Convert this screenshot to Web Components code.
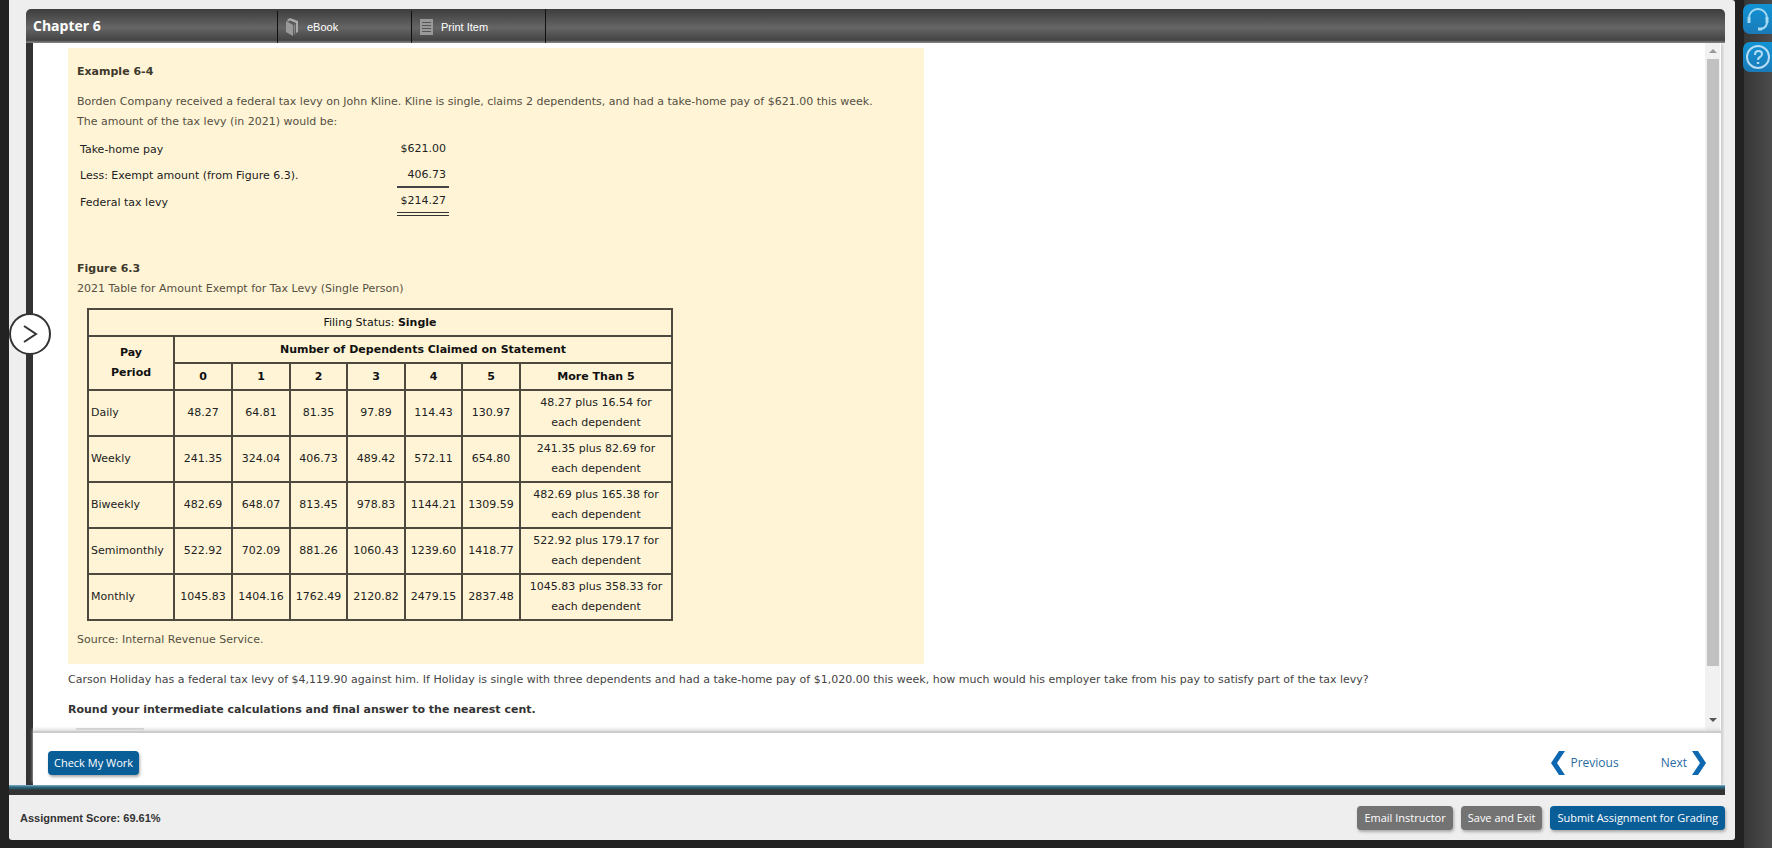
<!DOCTYPE html>
<html lang="en">
<head>
<meta charset="utf-8">
<title>Chapter 6</title>
<style>
  html, body { margin: 0; height: 100%; background: #222; }
  body { font: 11px/20px "DejaVu Sans", Verdana, sans-serif; color: #444; }
</style>
</head>
<body>
<assignment-app></assignment-app>

<template id="t-app">
  <style>
    :host { display: flex; height: 100vh; box-sizing: border-box; padding: 0 0 8px 9px; overflow: hidden; background: #222; }
    .frame { flex: 1; min-width: 0; display: flex; flex-direction: column; background: #eee; border-radius: 0 3px 3px 3px; position: relative; }
    .work { flex: 1; min-height: 0; margin: 9px 10px 0 17px; display: flex; flex-direction: column; }
    .pane { flex: 1; min-height: 0; margin-right: 4px; border-left: 7px solid #333; display: flex; flex-direction: column; background: #fff; box-shadow: 3px 0 2px -1px #ccc; }
    .rule { height: 10px; margin-right: 10px; background: linear-gradient(#7db0cf 0, #2f6a80 2px, #284e58 4px, #333 5px); }
    .toggle { position: absolute; left: 0; top: 313px; width: 42px; height: 42px; padding: 0; border: 2px solid #333; border-radius: 50%; background: #fff; }
    .toggle svg { display: block; margin: auto; }
    aside { width: 37px; margin-bottom: -8px; box-sizing: border-box; padding: 4px 0 0 8px; display: flex; flex-direction: column; gap: 8px;
      background: linear-gradient(90deg, #222 9px, #363636 9px, #4c4c4c 100%); }
  </style>
  <div class="frame">
    <div class="work">
      <chapter-header heading="Chapter 6"></chapter-header>
      <div class="pane">
        <scroll-view><tax-question></tax-question></scroll-view>
        <question-nav></question-nav>
      </div>
    </div>
    <div class="rule"></div>
    <score-bar></score-bar>
    <button class="toggle" aria-label="Open question list">
      <svg width="16" height="20" viewBox="0 0 16 20" fill="none" stroke="#333" stroke-width="2"><path d="M2 2l12 8-12 8"/></svg>
    </button>
  </div>
  <aside>
    <side-tab label="Support">
      <svg width="26" height="26" viewBox="0 0 26 26" fill="none" stroke="#a5daf5"><path stroke-width="2" d="M4 13V12a9 9 0 0 1 18 0v5q-1 5-6 6"/><path stroke-width="3" d="M4 11v6M22 11v6"/><path stroke-width="3" d="M13 23h4"/></svg>
    </side-tab>
    <side-tab label="Help">
      <svg width="26" height="26" viewBox="0 0 26 26" fill="none" stroke="#b5dcf4" stroke-width="2"><circle cx="13" cy="13" r="11"/><path d="M10 11q0-4 3.500-4t3.500 3q0 2-2 3t-2 3"/><path stroke-width="2.500" d="M13 18v2"/></svg>
    </side-tab>
  </aside>
</template>

<template id="t-side">
  <style>
    :host { display: block; }
    button { display: flex; align-items: center; width: 100%; height: 30px; padding: 0 0 0 2px; border: 0; border-radius: 7px 0 0 7px; background: linear-gradient(#1193d4, #1a7ab8); overflow: hidden; }
    ::slotted(svg) { flex: none; }
  </style>
  <button><slot></slot></button>
</template>

<template id="t-header">
  <style>
    :host { display: block; flex: none; }
    header { display: flex; height: 34px; box-sizing: border-box; border-radius: 5px 5px 0 0; color: #fff;
      background: linear-gradient(#3d3d3d, #656565 55%, #444 92%, #777 97%); }
    h1 { width: 244px; margin: 0; padding-left: 7px; font: bold 14px/33px "Open Sans", sans-serif; }
    a { display: flex; align-items: center; gap: 8px; width: 134px; box-sizing: border-box; padding-left: 8px; border-left: 1px solid #111; margin-top: 2px;
      font: 11px/30px "Liberation Sans", Arial, sans-serif; color: #fff; text-decoration: none; }
    nav { display: flex; border-right: 1px solid #111; }
  </style>
  <header>
    <h1></h1>
    <nav>
      <a href="#ebook"><svg width="13" height="18" viewBox="0 0 13 18"><path fill="#9a9a9a" d="M0 3l7 4v11l-7-4z"/><path fill="#aaa" d="M1 2l3-2 8 3v11l-2 1V5L4 2.500 2 3.500z"/><path fill="#888" d="M8 7l1-1v10l-1 1z"/></svg>eBook</a>
      <a href="#print"><svg width="13" height="16" viewBox="0 0 13 16"><path fill="#999" d="M0 0h13v16H0z"/><path stroke="#555" d="M2 3.500h9M2 6.500h9M2 9.500h9M2 12.500h9"/></svg>Print Item</a>
    </nav>
  </header>
</template>

<template id="t-scroll">
  <style>
    :host { flex: 1; min-height: 0; display: flex; }
    .view { flex: 1; min-width: 0; overflow: auto; scrollbar-width: none; }
    .bar { width: 15px; margin-right: 1px; background: #f1f1f1; display: flex; flex-direction: column; align-items: center; }
    .bar i { border: 4px solid transparent; }
    .bar .up { border-bottom-color: #999; border-top: 0; margin: 6px 0; }
    .bar .down { border-top-color: #555; border-bottom: 0; margin: 6px 0 9px; }
    .track { flex: 1; align-self: stretch; padding: 0 1px 0 2px; }
    .thumb { height: 93%; background: #c1c1c1; }
  </style>
  <div class="view"><slot></slot></div>
  <div class="bar" aria-hidden="true"><i class="up"></i><div class="track"><div class="thumb"></div></div><i class="down"></i></div>
</template>

<template id="t-question">
  <style>
    :host { display: block; padding: 5px 35px 0; }
    p { margin: 0; }
    .ask { margin-top: 6px; }
    .round { margin-top: 10px; font-weight: bold; color: #333; }
    .field { display: block; width: 68px; height: 26px; margin: 8px 0 0 8px; box-sizing: border-box; border: 2px solid #ccc; }
  </style>
  <tax-example></tax-example>
  <p class="ask">Carson Holiday has a federal tax levy of $4,119.90 against him. If Holiday is single with three dependents and had a take-home pay of $1,020.00 this week, how much would his employer take from his pay to satisfy part of the tax levy?</p>
  <p class="round" id="q">Round your intermediate calculations and final answer to the nearest cent.</p>
  <input class="field" aria-labelledby="q">
</template>

<template id="t-example">
  <style>
    :host { display: block; max-width: 856px; box-sizing: border-box; padding: 14px 9px; background: #fff5d6; color: #554f42; }
    h2, h3, p { margin: 0; font-size: 11px; line-height: 20px; }
    h2, h3 { color: #3d382c; }
    h2 { margin-bottom: 10px; }
    .calc { margin: 5px 0 43px; border-spacing: 0; color: #222; }
    .calc th { width: 317px; padding: 0 0 0 3px; text-align: left; font-weight: normal; height: 26px; }
    .calc td { padding: 0; vertical-align: top; }
    .calc span { display: block; padding: 2px 3px 1px; text-align: right; width: 46px; }
    .sum { border-bottom: 2px solid #444; }
    .total { border-bottom: 4px double #333; }
    .src { margin-top: 9px; }
  </style>
  <h2>Example 6-4</h2>
  <p>Borden Company received a federal tax levy on John Kline. Kline is single, claims 2 dependents, and had a take-home pay of $621.00 this week.<br>The amount of the tax levy (in 2021) would be:</p>
  <table class="calc">
    <tr><th scope="row">Take-home pay</th><td><span>$621.00</span></td></tr>
    <tr><th scope="row">Less: Exempt amount (from Figure 6.3).</th><td><span class="sum">406.73</span></td></tr>
    <tr><th scope="row">Federal tax levy</th><td><span class="total">$214.27</span></td></tr>
  </table>
  <h3>Figure 6.3</h3>
  <p>2021 Table for Amount Exempt for Tax Levy (Single Person)</p>
  <levy-table></levy-table>
  <p class="src">Source: Internal Revenue Service.</p>
</template>

<template id="t-levy">
  <style>
    :host { display: block; margin: 9px 0 0 10px; }
    table { table-layout: fixed; width: 586px; border-collapse: collapse; color: #222; }
    th, td { border: 2px solid #4d493f; padding: 0; height: 25px; text-align: center; }
    tbody th, tbody td { height: 44px; }
    thead { color: #111; }
    tbody th { text-align: left; padding-left: 2px; font-weight: normal; }
    .plain { font-weight: normal; }
    td:last-child { padding: 0 6px; }
    .pay { padding: 0 20px; }
  </style>
  <table>
    <colgroup><col style="width:86px"><col style="width:58px"><col style="width:58px"><col style="width:57px"><col style="width:58px"><col style="width:57px"><col style="width:58px"><col></colgroup>
    <thead>
      <tr><th class="plain" colspan="8">Filing Status: <b>Single</b></th></tr>
      <tr><th class="pay" rowspan="2">Pay Period</th><th colspan="7">Number of Dependents Claimed on Statement</th></tr>
      <tr><th>0</th><th>1</th><th>2</th><th>3</th><th>4</th><th>5</th><th>More Than 5</th></tr>
    </thead>
    <tbody></tbody>
  </table>
</template>

<template id="t-nav">
  <style>
    :host { flex: none; display: flex; align-items: center; height: 44px; padding: 8px 15px 0; background: #fff; border-top: 2px solid #ccc; box-shadow: 0 -2px 3px #ddd; position: relative; }
    nav { margin-left: auto; display: flex; gap: 42px; }
    a { display: flex; align-items: center; gap: 5px; font: 12px/24px "Open Sans", sans-serif; color: #2a6ba3; text-decoration: none; }
  </style>
  <action-button>Check My Work</action-button>
  <nav>
    <a href="#previous"><svg width="14" height="24" viewBox="0 0 14 24"><path fill="#0e68b1" d="M8 0h6L6 12l8 12H8L0 12z"/></svg>Previous</a>
    <a href="#next">Next<svg width="14" height="24" viewBox="0 0 14 24"><path fill="#0e68b1" d="M6 0H0l8 12-8 12h6l8-12z"/></svg></a>
  </nav>
</template>

<template id="t-score">
  <style>
    :host { flex: none; display: flex; align-items: center; gap: 8px; height: 45px; padding: 0 10px 0 11px; --button-pad: 7px; }
    strong { margin-right: auto; font: bold 11px/20px "Liberation Sans", Arial, sans-serif; color: #333; }
  </style>
  <strong>Assignment Score: 69.61%</strong>
  <action-button tone="gray">Email Instructor</action-button>
  <action-button tone="gray">Save and Exit</action-button>
  <action-button>Submit Assignment for Grading</action-button>
</template>

<template id="t-button">
  <style>
    :host { display: block; }
    button { display: block; height: 24px; padding: 0 var(--button-pad, 6px); border: 0; border-radius: 4px; background: #0a5e98; color: #fff; box-shadow: 1px 2px 3px #aaa; font: 11px/24px "Open Sans", sans-serif; white-space: nowrap; }
    :host([tone="gray"]) button { background: #737373; }
  </style>
  <button><slot></slot></button>
</template>

<script>
  class Base extends HTMLElement {
    constructor() {
      super();
      const t = document.getElementById(this.constructor.template);
      this.attachShadow({ mode: 'open' }).append(t.content.cloneNode(true));
    }
  }
  const define = (name, template, base = Base) =>
    customElements.define(name, class extends base { static template = template; });

  define('action-button', 't-button');
  define('side-tab', 't-side', class extends Base {
    connectedCallback() { this.shadowRoot.querySelector('button').setAttribute('aria-label', this.getAttribute('label')); }
  });
  define('chapter-header', 't-header', class extends Base {
    connectedCallback() { this.shadowRoot.querySelector('h1').textContent = this.getAttribute('heading'); }
  });
  define('levy-table', 't-levy', class extends Base {
    connectedCallback() {
      const rows = [
        ['Daily', '48.27', '64.81', '81.35', '97.89', '114.43', '130.97', '48.27 plus 16.54 for each dependent'],
        ['Weekly', '241.35', '324.04', '406.73', '489.42', '572.11', '654.80', '241.35 plus 82.69 for each dependent'],
        ['Biweekly', '482.69', '648.07', '813.45', '978.83', '1144.21', '1309.59', '482.69 plus 165.38 for each dependent'],
        ['Semimonthly', '522.92', '702.09', '881.26', '1060.43', '1239.60', '1418.77', '522.92 plus 179.17 for each dependent'],
        ['Monthly', '1045.83', '1404.16', '1762.49', '2120.82', '2479.15', '2837.48', '1045.83 plus 358.33 for each dependent']
      ];
      this.shadowRoot.querySelector('tbody').innerHTML = rows.map(([name, ...cells]) =>
        `<tr><th scope="row">${name}</th>${cells.map(c => `<td>${c}</td>`).join('')}</tr>`).join('');
    }
  });
  define('tax-example', 't-example');
  define('tax-question', 't-question');
  define('scroll-view', 't-scroll');
  define('question-nav', 't-nav');
  define('score-bar', 't-score');
  define('assignment-app', 't-app');
</script>
</body>
</html>
